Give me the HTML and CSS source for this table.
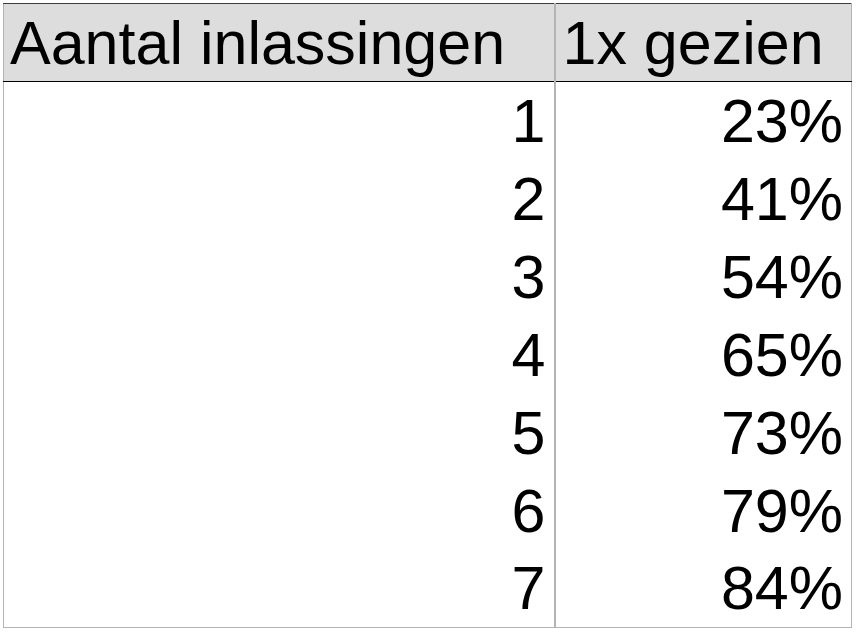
FILE: index.html
```html
<!DOCTYPE html>
<html lang="nl">
<head>
<meta charset="utf-8">
<title>Inlassingen</title>
<link rel="stylesheet" href="styles.css">
</head>
<body>
<table class="sheet">
  <thead>
    <tr>
      <th class="col-a">Aantal inlassingen</th>
      <th class="col-b">1x gezien</th>
    </tr>
  </thead>
  <tbody>
    <tr><td class="col-a">1</td><td class="col-b">23%</td></tr>
    <tr><td class="col-a">2</td><td class="col-b">41%</td></tr>
    <tr><td class="col-a">3</td><td class="col-b">54%</td></tr>
    <tr><td class="col-a">4</td><td class="col-b">65%</td></tr>
    <tr><td class="col-a">5</td><td class="col-b">73%</td></tr>
    <tr><td class="col-a">6</td><td class="col-b">79%</td></tr>
    <tr><td class="col-a">7</td><td class="col-b">84%</td></tr>
  </tbody>
</table>
</body>
</html>
```
FILE: styles.css
```css
html, body {
  margin: 0;
  padding: 0;
  background: #ffffff;
}

body {
  padding: 3px 0 0 3px;
  font-family: "Liberation Sans", Arial, sans-serif;
  color: #000000;
}

.sheet {
  border-collapse: collapse;
  table-layout: fixed;
  width: 849px;
  font-size: 61px;
}

.sheet th,
.sheet td {
  height: 78px;
  padding: 0 8px 0 6px;
  line-height: 70px;
  vertical-align: middle;
  box-sizing: border-box;
  white-space: nowrap;
  overflow: hidden;
}

.sheet .col-a {
  width: 551px;
  border-left: 1px solid #b4b4b4;
  border-right: 2px solid #b4b4b4;
}

.sheet .col-b {
  border-right: 1px solid #b4b4b4;
}

.sheet thead th {
  background: #dddddd;
  font-weight: normal;
  text-align: left;
  border-top: 1px solid #3c3c3c;
  border-bottom: 1px solid #000000;
}

.sheet thead .col-b {
  padding-left: 7px;
}

.sheet tbody td {
  text-align: right;
}

.sheet tbody tr:last-child td {
  border-bottom: 1px solid #b4b4b4;
}
```
